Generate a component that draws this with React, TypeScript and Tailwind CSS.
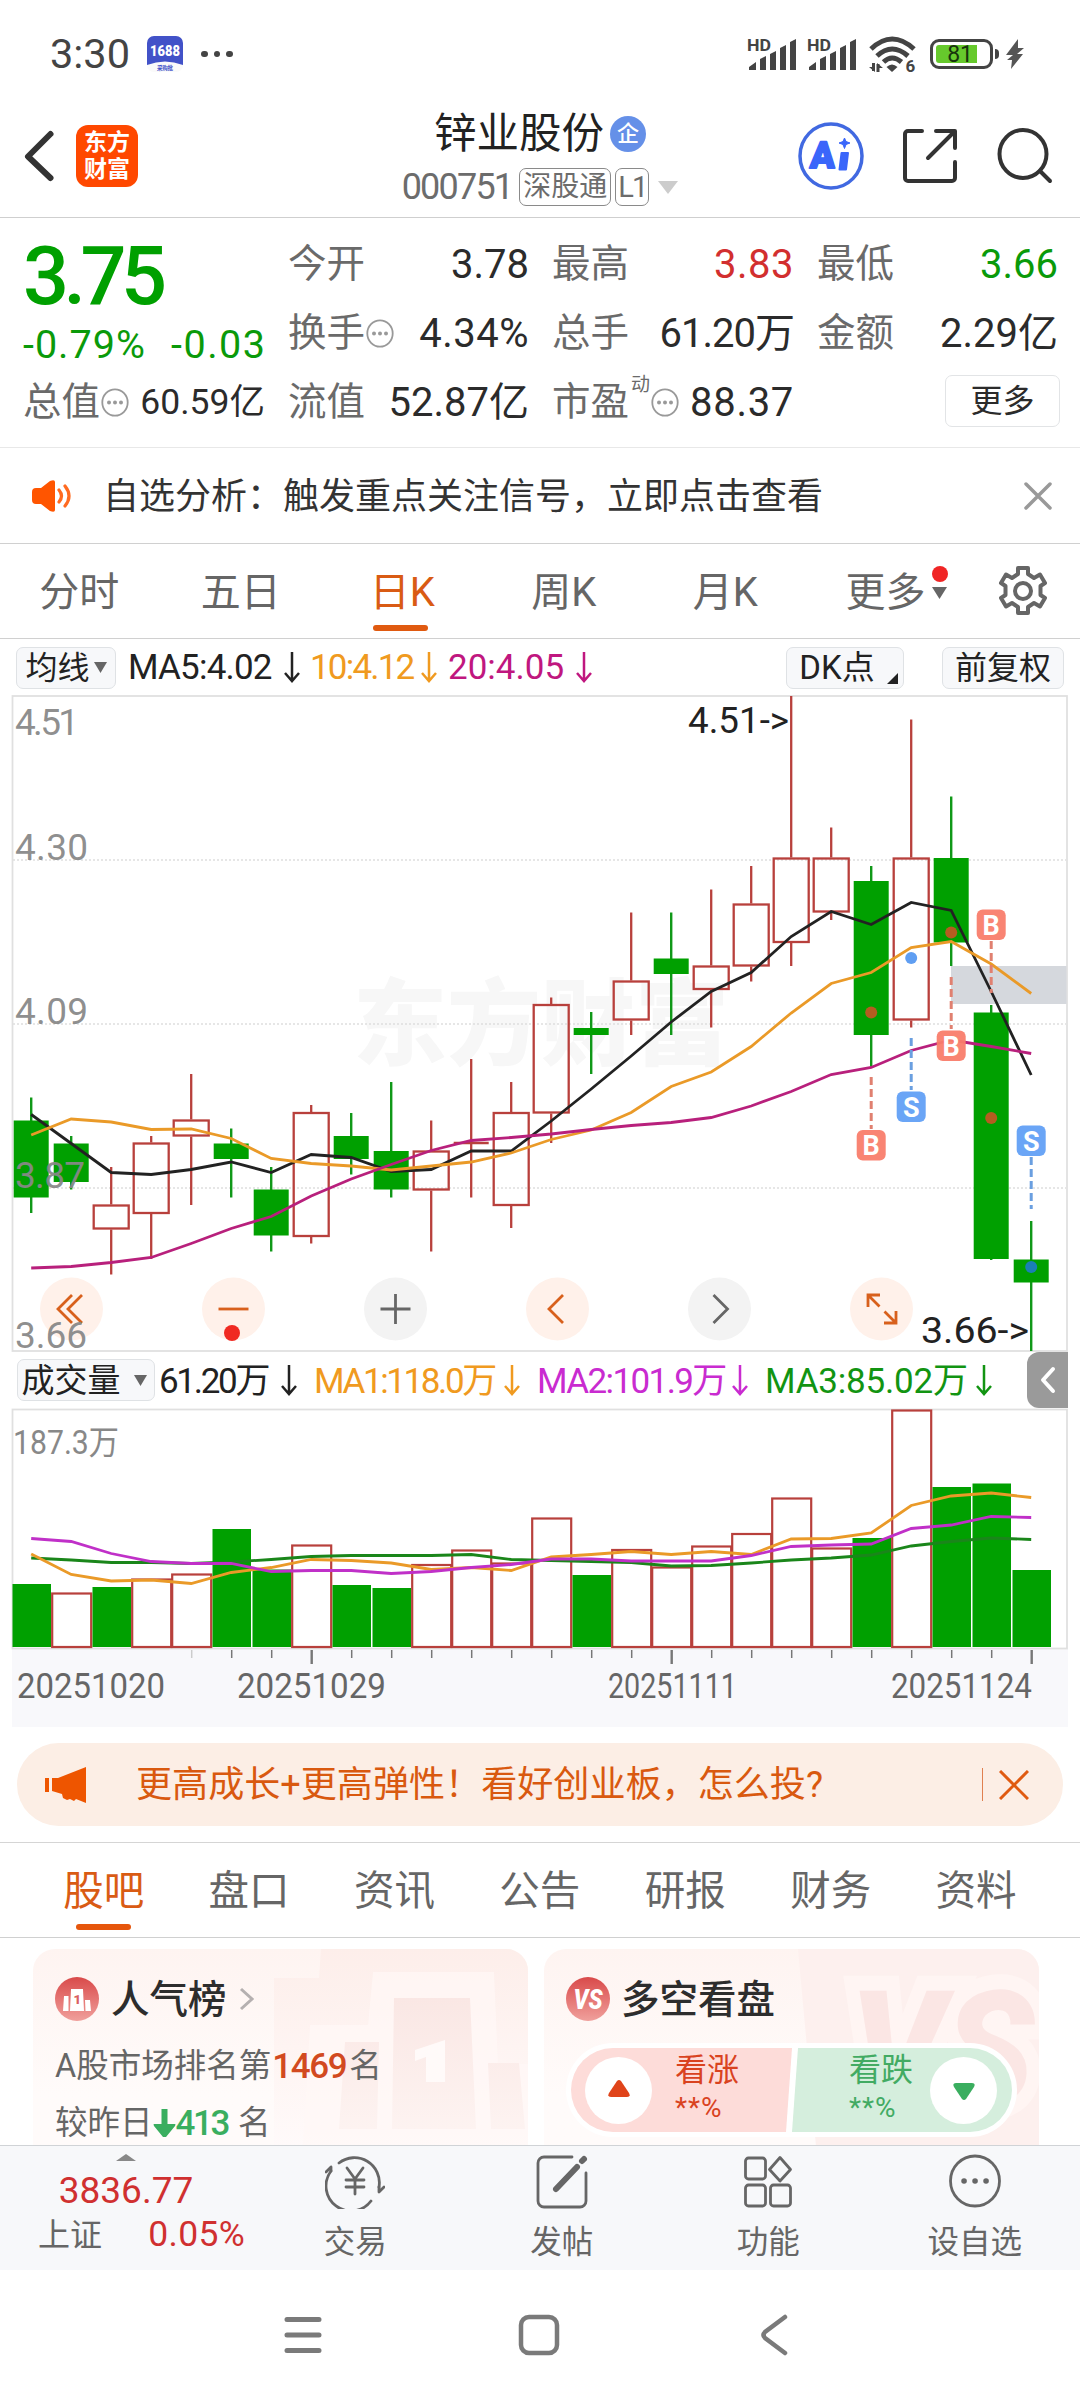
import type { ReactNode } from "react"

const UP = "#b8403c"
const DOWN = "#00a000"

// [up, high, bodyTop, bodyBottom, low] in chart pixels
const candles: [boolean, number, number, number, number][] = [
  [false, 1097.5, 1120.5, 1197.5, 1213],
  [false, 1136, 1143.5, 1182, 1189.5],
  [true, 1167, 1204.5, 1229.5, 1274.5],
  [true, 1136, 1142.5, 1214, 1259],
  [true, 1074, 1119.5, 1136.5, 1205],
  [false, 1128.5, 1143.5, 1159, 1197.5],
  [false, 1167, 1189.5, 1235.5, 1251.5],
  [true, 1105, 1112, 1237, 1243.5],
  [false, 1113, 1136, 1159, 1174.5],
  [false, 1082, 1151, 1189.5, 1197.5],
  [true, 1120.5, 1150.5, 1190.5, 1251.5],
  [true, 1059, 1142, 1144, 1197.5],
  [true, 1082, 1112, 1206, 1228],
  [true, 997.5, 1004, 1113.5, 1143],
  [false, 1012, 1028, 1035, 1074],
  [true, 912.5, 980.5, 1020.5, 1035],
  [false, 912.5, 958.5, 974, 1035],
  [true, 889.5, 965.5, 990, 1027.5],
  [true, 866, 903.5, 966.5, 981.5],
  [true, 696, 857.5, 943, 966],
  [true, 827.5, 857.5, 912.5, 920],
  [false, 866, 881, 1035, 1066.5],
  [true, 719.5, 857.5, 1020.5, 1027.5],
  [false, 796.5, 858, 942.5, 966],
  [false, 1005, 1012.5, 1259, 1260],
  [false, 1221, 1259.5, 1282.5, 1351],
]

const ma5 = [1114.5, 1143.5, 1172.5, 1174.5, 1169.5, 1162, 1172.5, 1154.5, 1157.5, 1171.5, 1169.5, 1151, 1151, 1121, 1089, 1056, 1022, 991.5, 972.5, 936.5, 911.5, 924.5, 902.5, 910.5, 991.5, 1075]
const ma10 = [1135, 1119, 1122, 1129.5, 1129, 1138.5, 1158.5, 1163.5, 1166, 1170, 1166, 1162, 1153, 1139.5, 1130, 1112.5, 1086.5, 1072, 1046.5, 1013, 983.5, 972.5, 947.5, 941.5, 964, 993.5]
const ma20 = [1268, 1266.5, 1262.5, 1257.5, 1243.5, 1228.5, 1216.5, 1196, 1179, 1164.5, 1150.5, 1140.5, 1137.5, 1134, 1129.5, 1125.5, 1122.5, 1117.5, 1106, 1091.5, 1074.5, 1067.5, 1050.5, 1040, 1046.5, 1053.5]

const volumes = [1584, 1592.5, 1587, 1578.5, 1573.5, 1529, 1569.5, 1544.5, 1585, 1588, 1564, 1549.5, 1562.5, 1517.5, 1575, 1549, 1566.5, 1545.5, 1533, 1497.5, 1547.5, 1538, 1409.5, 1487, 1483.5, 1570]
const volUp = [0, 1, 0, 1, 1, 0, 0, 1, 0, 0, 1, 1, 1, 1, 0, 1, 1, 1, 1, 1, 1, 0, 1, 0, 0, 0]
const vma1 = [1554, 1574.5, 1581, 1580, 1583.5, 1572.5, 1567.5, 1559.5, 1560.5, 1563, 1569.5, 1567.5, 1570.5, 1557, 1554.5, 1551.5, 1554.5, 1551.5, 1554.5, 1539, 1538.5, 1533, 1505.5, 1496, 1493, 1497.5]
const vma2 = [1538.5, 1541.5, 1553.5, 1561.5, 1563.5, 1563.5, 1571.5, 1570.5, 1570.5, 1573.5, 1571.5, 1567.5, 1564.5, 1559, 1559, 1561, 1561, 1561, 1555.5, 1546.5, 1545, 1544, 1528.5, 1525, 1516.5, 1517.5]
const vma3 = [1558, 1560, 1562.5, 1562.5, 1563.5, 1562, 1559.5, 1556.5, 1555.5, 1555.5, 1555.5, 1554.5, 1559.5, 1560.5, 1561.5, 1562.5, 1566, 1565.5, 1563, 1560, 1558, 1555, 1546, 1541.5, 1538, 1539.5]

const cx = (i: number) => 31.2 + 40 * i
const line = (ys: number[]) => ys.map((y, i) => `${cx(i)},${y}`).join(" ")

function Signal() {
  return (
    <svg width="50" height="34" viewBox="0 0 50 34" fill="#444">
      <text x="0" y="13.5" fontSize="16" fontWeight="700" textLength="24" lengthAdjust="spacingAndGlyphs">HD</text>
      <path d="M2 33v-3l7-5v8zM13 33V22l6-3v14zM23 33V17l6-3v19zM33 33V11l6-3v25zM43 33V5l6-3v31z" />
    </svg>
  )
}

function StatusBar() {
  return (
    <div className="flex h-[108px] items-center pl-[50px] pr-[56px] text-[#444]">
      <span className="w-[97px] text-[41.5px] leading-none">3:30</span>
      <svg width="36" height="36" viewBox="0 0 36 36">
        <rect width="36" height="36" rx="7" fill="#fafafa" />
        <path d="M0 29V7a7 7 0 0 1 7-7h22a7 7 0 0 1 7 7v22Q18 22 0 29z" fill="#4252c8" />
        <text x="3" y="20" fontSize="14" fontWeight="900" fill="#fff" textLength="30" lengthAdjust="spacingAndGlyphs">1688</text>
        <text x="10" y="33.5" fontSize="5.5" fontWeight="700" fill="#4252c8" textLength="16">采购批</text>
      </svg>
      <div className="ml-[18px] flex gap-[6px]">
        <i className="size-[6.5px] rounded-full bg-[#444]" />
        <i className="size-[6.5px] rounded-full bg-[#444]" />
        <i className="size-[6.5px] rounded-full bg-[#444]" />
      </div>
      <div className="ml-auto flex items-center">
        <Signal />
        <div className="ml-[10px] flex"><Signal /></div>
        <svg className="ml-[12px]" width="48" height="38" viewBox="0 0 48 38" fill="none" stroke="#444" strokeWidth="5">
          <path d="M2 14Q23 -6 45 14M8 21Q23 7 39 21M14.500 27Q23 19 32.500 27" />
          <path d="M17.500 32Q23 27 28.500 32L23 37z" fill="#444" stroke="none" />
          <path d="M4.500 28v8M9 37v-8" strokeWidth="3" />
          <path d="M0 32l6 5v-5zM14 33l-6-5v5z" fill="#444" stroke="none" />
          <text x="36.500" y="37" fontSize="17" fontWeight="700" fill="#444" stroke="none">6</text>
        </svg>
        <div className="ml-[13px] flex h-[30px] w-[63px] items-center rounded-[9px] border-[3.5px] border-[#444] p-[3px]">
          <div className="flex h-[18px] w-[41px] items-center justify-end rounded-l-[3px] bg-[#66c92c] pr-[4px] text-[23px] leading-none text-[#17330c]">81</div>
        </div>
        <i className="ml-[2px] h-[10px] w-[4px] rounded-r-sm bg-[#444]" />
        <svg className="ml-[7px]" width="18" height="30" viewBox="0 0 18 30" fill="#555">
          <path d="M12 0L0 16h7L1 21h5l-1 9 12-15h-6l7-6h-6z" />
        </svg>
      </div>
    </div>
  )
}

function Header() {
  return (
    <div className="flex h-[110px] border-b border-[#cfcfcf]">
      <div className="flex h-24 w-[380px] items-center pl-[22px]">
        <svg width="34" height="56" viewBox="0 0 34 56" fill="none" stroke="#333" strokeWidth="6" strokeLinecap="round" strokeLinejoin="round">
          <path d="M28.500 6L6 28.500 28.500 50" />
        </svg>
        <div className="ml-5 flex size-[62px] flex-col items-center justify-center rounded-[12px] bg-[#ff4800] text-[23px] leading-[27px] font-bold text-white">
          <span>东方</span>
          <span>财富</span>
        </div>
      </div>
      <div className="flex w-80 flex-col items-center">
        <div className="mt-[2px] flex h-[48px] items-center text-[#222]">
          <span className="text-[42.5px] leading-none">锌业股份</span>
          <span className="ml-[6px] flex size-9 items-center justify-center rounded-full bg-[#6590e8] text-[22px] leading-none font-medium text-white">企</span>
        </div>
        <div className="mt-[9px] flex h-[40px] items-center text-[#6c6c6c]">
          <span className="text-[36px] leading-none tracking-[-1.8px]">000751</span>
          <span className="ml-[7px] flex h-[38px] w-[92px] items-center justify-center rounded-[7px] border-[1.5px] border-[#8a8a8a] text-[28px] leading-none">深股通</span>
          <span className="ml-[4px] flex h-[38px] w-[34px] items-center justify-center rounded-[7px] border-[1.5px] border-[#8a8a8a] text-[29px] leading-none tracking-[-2px]">L1</span>
          <svg className="ml-[9px]" width="20" height="13" viewBox="0 0 20 13"><path d="M0 0h20L10 13z" fill="#ccc" /></svg>
        </div>
      </div>
      <div className="flex h-24 flex-1 items-center pl-[98px]">
        <svg width="66" height="68" viewBox="0 0 66 68">
          <ellipse cx="33" cy="34" rx="31" ry="32" fill="#fff" stroke="#4169e1" strokeWidth="3.500" />
          <g fill="#3a66fa" stroke="#3a66fa" strokeLinejoin="round">
            <text x="14" y="46.500" fontSize="37" fontWeight="900" strokeWidth="1.800" transform="skewX(-3)" textLength="25" lengthAdjust="spacingAndGlyphs">A</text>
            <path d="M43.500 31h6.500l-2 16.500h-6.500z" strokeWidth="2" />
            <path d="M46.500 16l1.500 3.500 4 1.500-4 1.500-1.500 4-1.500-4-4-1.500 4-1.500z" strokeWidth="1" />
          </g>
        </svg>
        <svg className="ml-[38px]" width="56" height="56" viewBox="0 0 56 56" fill="none" stroke="#333" strokeWidth="4" strokeLinecap="round" strokeLinejoin="round">
          <path d="M20 3H6a3 3 0 0 0-3 3v44a3 3 0 0 0 3 3h44a3 3 0 0 0 3-3V34" />
          <path d="M34 3h19v17M52 4L26 30" />
        </svg>
        <svg className="ml-[38px]" width="58" height="58" viewBox="0 0 58 58" fill="none" stroke="#333" strokeWidth="4" strokeLinecap="round">
          <ellipse cx="27" cy="27" rx="23.500" ry="24" />
          <path d="M44 44l10 10" />
        </svg>
      </div>
    </div>
  )
}

function Info() {
  return (
    <svg className="ml-[1px] shrink-0" width="28" height="29" viewBox="0 0 28 29">
      <ellipse cx="14" cy="14.500" rx="12.700" ry="13.200" fill="none" stroke="#999" strokeWidth="1.800" />
      <g fill="#999"><circle cx="8" cy="14.500" r="2" /><circle cx="14" cy="14.500" r="2" /><circle cx="20" cy="14.500" r="2" /></g>
    </svg>
  )
}

function Stat({ label, extra, value, tone = "text-[#2b2b2b]" }: { label: string; extra?: ReactNode; value: string; tone?: string }) {
  return (
    <div className="flex h-[69px] items-center">
      <span className="text-[38.5px] leading-none whitespace-nowrap text-[#6a6a6a]">{label}</span>
      {extra}
      <span className={"ml-auto text-[40px] leading-none whitespace-nowrap " + tone}>{value}</span>
    </div>
  )
}

function Quote() {
  return (
    <div className="flex h-[230px] border-b border-[#e8e8e8] pt-[12px] pl-[23px]">
      <div className="w-[242px]">
        <div className="flex h-[92px] items-center text-[81px] leading-none font-medium tracking-[-5.5px] text-[#00a000]">3.75</div>
        <div className="flex h-[46px] items-center justify-between text-[39.5px] leading-none text-[#0a9a0a]">
          <span className="tracking-[1px]">-0.79%</span>
          <span className="mr-[-1.5px] tracking-[1.5px]">-0.03</span>
        </div>
        <div className="flex h-[69px] items-center">
          <span className="text-[38.5px] leading-none whitespace-nowrap text-[#6a6a6a]">总值</span>
          <Info />
          <span className="ml-auto text-[35.5px] leading-none whitespace-nowrap text-[#2b2b2b]">60.59亿</span>
        </div>
      </div>
      <div className="ml-[23px] w-[241px]">
        <Stat label="今开" value="3.78" />
        <Stat label="换手" extra={<Info />} value="4.34%" tone="tracking-[0.5px] text-[#2b2b2b]" />
        <Stat label="流值" value="52.87亿" />
      </div>
      <div className="ml-[23px] w-[242px]">
        <Stat label="最高" value="3.83" tone="tracking-[0.5px] text-[#d22f2f]" />
        <Stat label="总手" value="61.20万" tone="tracking-[-1px] text-[#2b2b2b]" />
        <Stat
          label="市盈"
          extra={<><span className="-mt-9 ml-[2px] text-[19px] leading-none text-[#6a6a6a]">动</span><Info /></>}
          value="88.37"
          tone="tracking-[0.7px] text-[#2b2b2b]"
        />
      </div>
      <div className="ml-[23px] w-[241px]">
        <Stat label="最低" value="3.66" tone="text-[#0a9a0a]" />
        <Stat label="金额" value="2.29亿" />
        <div className="flex h-[69px] items-center justify-end">
          <button className="mt-[-3px] mr-[-2px] h-[52px] w-[115px] rounded-[7px] border-[1.5px] border-[#e2e4e6] text-[32px] leading-none text-[#2b2b2b]">更多</button>
        </div>
      </div>
    </div>
  )
}

function Notice() {
  return (
    <div className="flex h-[96px] items-center border-b border-[#d0d0d0] pl-[31px] pr-[28px]">
      <svg width="42" height="34" viewBox="0 0 42 34">
        <path d="M1 13q0-4 4-4h5L19 2q5-2 5 1v28q0 3-5 1l-9-7H5q-4 0-4-4z" fill="#ff5500" />
        <path d="M28 11q5 6 0 12M34 7q8 10 0 20" fill="none" stroke="#ff6a20" strokeWidth="3.200" strokeLinecap="round" />
      </svg>
      <span className="mt-[2px] ml-[30px] text-[36px] leading-none whitespace-nowrap text-[#333]">自选分析：触发重点关注信号，立即点击查看</span>
      <svg className="ml-auto" width="28" height="28" viewBox="0 0 28 28" stroke="#999" strokeWidth="3.500" strokeLinecap="round">
        <path d="M2 2l24 24M26 2L2 26" />
      </svg>
    </div>
  )
}

function PeriodTabs() {
  const tabs = ["分时", "五日", "日K", "周K", "月K"]
  return (
    <div className="flex h-[95px] border-b border-[#d0d0d0] text-[40px] leading-none text-[#666]">
      {tabs.map((t) => (
        <div key={t} className={"relative flex w-[161.500px] items-center justify-center pt-[3px] pr-[3px] " + (t === "日K" ? "text-[#d95b14]" : "")}>
          {t}
          {t === "日K" && <i className="absolute bottom-[7px] mr-[3px] h-[6px] w-[55px] rounded-full bg-[#e05a10]" />}
        </div>
      ))}
      <div className="flex items-center pt-[3px] pl-[38px]">
        更多
        <div className="ml-[6px] flex flex-col items-center gap-[5px] pb-[20px]">
          <i className="size-4 rounded-full bg-[#f02525]" />
          <svg width="15" height="12" viewBox="0 0 15 12"><path d="M0 0h15L7.500 12z" fill="#666" /></svg>
        </div>
      </div>
      <svg className="ml-[50px] self-center" width="50" height="52" viewBox="0 0 50 52" fill="none" stroke="#666" strokeWidth="4" strokeLinejoin="round">
        <path d="M20 3h10v6l6 4 6-3.500 5 8.500-4.500 3v9l4.500 3-5 8.500-6-3.500-6 4v6H20v-6l-6-4-6 3.500L3 33l4.500-3v-9L3 18l5-8.500 6 3.500 6-4z" />
        <circle cx="25" cy="26" r="8" />
      </svg>
    </div>
  )
}

function Down({ className = "" }: { className?: string }) {
  return (
    <svg className={"shrink-0 " + className} width="16" height="31" viewBox="0 0 16 31" fill="none" stroke="currentColor" strokeWidth="2.500">
      <path d="M8 0v29M1 21l7 8 7-8" />
    </svg>
  )
}

function Caret() {
  return <svg width="13" height="11" viewBox="0 0 13 11"><path d="M0 0h13L6.500 11z" fill="#666" /></svg>
}

function MaRow() {
  return (
    <div className="flex h-[57px] items-center pt-[2px] pl-[16px] text-[35px] leading-none whitespace-nowrap">
      <button className="flex h-[42px] w-[100px] items-center justify-center gap-[4px] rounded-[7px] border-[1.5px] border-[#dfe2e5] bg-[#f7f8fa] text-[32px] leading-none whitespace-nowrap text-[#222]">均线<Caret /></button>
      <span className="ml-[12px] w-[156px] tracking-[-0.8px] text-[#222]">MA5:4.02</span>
      <Down className="text-[#222]" />
      <span className="ml-[10px] w-[111px] tracking-[-1.8px] text-[#f09a20]">10:4.12</span>
      <Down className="text-[#f09a20]" />
      <span className="ml-[11px] w-[128px] text-[#c0177f]">20:4.05</span>
      <Down className="text-[#c0177f]" />
      <button className="relative ml-[194px] h-[42px] w-[118px] rounded-[7px] border-[1.5px] border-[#dfe2e5] bg-[#f7f8fa] pr-[16px] text-[33px] leading-none whitespace-nowrap text-[#222]">
        DK点
        <svg className="absolute right-[5px] bottom-[4px]" width="11" height="11" viewBox="0 0 11 11"><path d="M11 0v11H0z" fill="#222" /></svg>
      </button>
      <button className="ml-[38px] h-[42px] w-[122px] rounded-[7px] border-[1.5px] border-[#dfe2e5] bg-[#f7f8fa] text-[32px] leading-none whitespace-nowrap text-[#222]">前复权</button>
    </div>
  )
}

function Marker({ i, y, kind, from, to }: { i: number; y: number; kind: "B" | "S"; from: number; to: number }) {
  const color = kind === "B" ? "#f97d6c" : "#62a0f6"
  return (
    <g>
      <line x1={cx(i)} x2={cx(i)} y1={from} y2={to} stroke={kind === "B" ? "#e08070" : "#6a9fe0"} strokeWidth="3" strokeDasharray="8 4" />
      <rect x={cx(i) - 14.5} y={y} width="29" height="30.500" rx="6" fill={color} fillOpacity="0.95" />
      <text x={cx(i)} y={y + 25} fontSize="27" fontWeight="700" fill="#fff" textAnchor="middle">{kind}</text>
    </g>
  )
}

const controls = [
  { x: 71.5, on: true, d: "M72 1295l-14 14 14 14M82 1295l-14 14 14 14" },
  { x: 233.5, on: true, d: "M218.500 1309h30" },
  { x: 395.5, on: false, d: "M380.500 1309h30M395.500 1294v30" },
  { x: 557.5, on: true, d: "M563 1295l-14 14 14 14" },
  { x: 719.5, on: false, d: "M713.500 1295l14 14-14 14" },
  { x: 881.5, on: true, d: "M868 1307v-12h12M868.500 1295.500l11 11M896 1311v12h-12M895.500 1322.500l-11-11" },
]

function KChart() {
  return (
    <svg className="block" width="1080" height="657" viewBox="0 695 1080 657" fill="none">
      <text x="353" y="1058" fontSize="94" fontWeight="900" fill="#f7f7f7" textLength="376">东方财富</text>
      <g stroke="#dedede" strokeWidth="1.500" strokeDasharray="2 2">
        <path d="M13 860H1066M13 1024H1066M13 1188H1066" />
      </g>
      <rect x="12.500" y="696" width="1054.500" height="655" stroke="#e0e0e0" strokeWidth="1.800" />
      <rect x="951" y="966" width="115.500" height="38" fill="#d5d8dd" />

      {controls.map((c) => (
        <g key={c.x}>
          <circle cx={c.x} cy="1309" r="31.500" fill={c.on ? "#fff1ea" : "#f3f3f3"} />
          <path d={c.d} stroke={c.on ? "#d8601c" : "#666"} strokeWidth="2.800" />
        </g>
      ))}
      <circle cx="232" cy="1333" r="8" fill="#f02a22" />

      {candles.map(([up, high, top, bottom, low], i) => {
        const x = cx(i)
        if (!up) {
          return (
            <g key={i}>
              <line x1={x} x2={x} y1={high} y2={low} stroke="#109818" strokeWidth="2.400" />
              <rect x={x - 17.5} y={top} width="35" height={bottom - top} fill={DOWN} />
            </g>
          )
        }
        return (
          <g key={i} stroke={UP} strokeWidth="2.300">
            <path d={`M${x} ${high}V${top}M${x} ${bottom}V${low}`} />
            {bottom - top < 4 ? <path d={`M${x - 17.5} 1143h35`} /> : <rect x={x - 17.5} y={top + 1} width="35" height={bottom - top - 2} />}
          </g>
        )
      })}

      <polyline points={line(ma5)} stroke="#222" strokeWidth="2.800" />
      <polyline points={line(ma10)} stroke="#ea9a28" strokeWidth="2.800" />
      <polyline points={line(ma20)} stroke="#b8207c" strokeWidth="2.800" />

      <circle cx={cx(21)} cy="1012.500" r="6" fill="#b55c20" />
      <circle cx={cx(22)} cy="958" r="6" fill="#5f9ef2" />
      <circle cx={cx(23)} cy="932.500" r="6" fill="#b55c20" />
      <circle cx={cx(24)} cy="1118" r="6" fill="#b55c20" />
      <circle cx={cx(25)} cy="1267" r="6" fill="#1a7fb5" />
      <Marker i={21} y={1130} kind="B" from={1077} to={1129} />
      <Marker i={22} y={1091.5} kind="S" from={1038} to={1090} />
      <Marker i={23} y={1030.5} kind="B" from={977} to={1029} />
      <Marker i={24} y={909.5} kind="B" from={941} to={993} />
      <Marker i={25} y={1125.5} kind="S" from={1157} to={1209} />

      <g fill="#888" fillOpacity="0.95" fontSize="37">
        <text x="15" y="735" textLength="64">4.51</text>
        <text x="15" y="860" textLength="73">4.30</text>
        <text x="15" y="1024" textLength="73">4.09</text>
        <text x="15" y="1188" textLength="70">3.87</text>
        <text x="15" y="1348" textLength="72">3.66</text>
      </g>
      <g fill="#222" fontSize="37">
        <text x="688" y="733" textLength="101" lengthAdjust="spacingAndGlyphs">4.51-&gt;</text>
        <text x="921" y="1343" textLength="108" lengthAdjust="spacingAndGlyphs">3.66-&gt;</text>
      </g>
    </svg>
  )
}

function VolumeRow() {
  return (
    <div className="flex h-[56px] items-center pl-[17px] text-[35px] leading-none whitespace-nowrap">
      <button className="flex h-[42px] w-[138px] items-center justify-center gap-[13px] rounded-[7px] border-[1.5px] border-[#dfe2e5] bg-[#f7f8fa] pr-[4px] text-[33px] leading-none text-[#222]">成交量<Caret /></button>
      <span className="mt-[2px] ml-[4px] w-[122px] tracking-[-2.3px] text-[#222]">61.20万</span>
      <Down className="text-[#222]" />
      <span className="mt-[2px] ml-[17px] w-[190px] tracking-[-2.4px] text-[#f09a20]">MA1:118.0万</span>
      <Down className="text-[#f09a20]" />
      <span className="mt-[2px] ml-[17px] w-[195px] tracking-[-1.6px] text-[#c92bd0]">MA2:101.9万</span>
      <Down className="text-[#c92bd0]" />
      <span className="mt-[2px] ml-[17px] w-[211px] tracking-[-0.2px] text-[#129412]">MA3:85.02万</span>
      <Down className="text-[#129412]" />
      <div className="ml-auto mr-[12px] flex h-[56px] w-[41px] items-center justify-center rounded-l-[12px] bg-[#9a9a9a]">
        <svg width="16" height="28" viewBox="0 0 16 28" fill="none" stroke="#fff" strokeWidth="4" strokeLinecap="round" strokeLinejoin="round"><path d="M13 3L3 14l10 11" /></svg>
      </div>
    </div>
  )
}

function VolumeChart() {
  return (
    <svg className="block" width="1080" height="319" viewBox="0 1408 1080 319" fill="none">
      <rect x="12" y="1649" width="1056" height="78" fill="#f8f8fb" />
      <rect x="12.500" y="1409.500" width="1054.500" height="239" stroke="#e0e0e0" strokeWidth="1.800" />
      {volumes.map((y, i) =>
        volUp[i] ? (
          <rect key={i} x={cx(i) - 19} y={y + 1} width="39" height={1646 - y} stroke={UP} strokeWidth="2.200" />
        ) : (
          <rect key={i} x={cx(i) - 18.7} y={y} width="38.500" height={1647 - y} fill={DOWN} />
        )
      )}
      <polyline points={line(vma3)} stroke="#1a861a" strokeWidth="2.800" />
      <polyline points={line(vma1)} stroke="#ea9a28" strokeWidth="2.800" />
      <polyline points={line(vma2)} stroke="#c030c8" strokeWidth="2.800" />
      {volumes.map((_, i) =>
        i < 4 ? null : (
          <line key={i} x1={cx(i) + 0.5} x2={cx(i) + 0.5} y1="1650" y2={(i - 7) % 9 === 0 ? 1664 : 1658} stroke={i === 4 ? "#ccc" : "#777"} strokeWidth={(i - 7) % 9 === 0 ? 2.4 : 1.5} />
        )
      )}
      <text x="13" y="1454" fontSize="33" fill="#888" textLength="106" lengthAdjust="spacingAndGlyphs">187.3万</text>
      <g fill="#666" fontSize="35">
        <text x="17" y="1698" textLength="148" lengthAdjust="spacingAndGlyphs">20251020</text>
        <text x="237" y="1698" textLength="149" lengthAdjust="spacingAndGlyphs">20251029</text>
        <text x="608" y="1698" textLength="129" lengthAdjust="spacingAndGlyphs">20251111</text>
        <text x="891" y="1698" textLength="141" lengthAdjust="spacingAndGlyphs">20251124</text>
      </g>
    </svg>
  )
}

function Promo() {
  return (
    <div className="border-b border-[#d5d5d5] px-[17px] pt-[16px] pb-[16px]">
      <div className="flex h-[83px] items-center rounded-full bg-[#fceee5] pl-[27px] pr-[34px]">
        <svg width="43" height="38" viewBox="0 0 43 38" fill="#ee5500">
          <path d="M1 12h4v14H1zM8 12h6L42 1v36l-10-4-2 2-4-2-3 1-4-2-1-4-10-3z" />
        </svg>
        <span className="mt-[2px] ml-[49px] text-[36.1px] leading-none whitespace-nowrap text-[#d9590f]">更高成长+更高弹性！看好创业板，怎么投?</span>
        <i className="ml-auto h-[33px] w-[1.5px] bg-[#e08050]" />
        <svg className="ml-[16px]" width="30" height="30" viewBox="0 0 30 30" stroke="#e05a10" strokeWidth="3"><path d="M1 1l28 28M29 1L1 29" /></svg>
      </div>
    </div>
  )
}

function SectionTabs() {
  const tabs = ["股吧", "盘口", "资讯", "公告", "研报", "财务", "资料"]
  return (
    <div className="flex h-[95px] border-b border-[#d0d0d0] pl-[31px] text-[40.5px] leading-none text-[#666]">
      {tabs.map((t, i) => (
        <div key={t} className={"relative flex w-[145.400px] items-center justify-center pt-[2px] " + (i === 0 ? "text-[#d95b14]" : "")}>
          {t}
          {i === 0 && <i className="absolute bottom-[7px] h-[6px] w-[55px] rounded-full bg-[#e6560c]" />}
        </div>
      ))}
    </div>
  )
}

function Cards() {
  return (
    <div className="flex h-[207px] gap-4 overflow-hidden pt-[11px] pl-[33px]">
      <div className="relative h-[240px] w-[495px] overflow-hidden rounded-[22px] bg-linear-to-b from-[#fef4f1] to-[#fffbfa] to-60% pt-[28px] pl-[22px] text-[32.5px] leading-none text-[#666]">
        <svg className="absolute top-0 left-0" width="495" height="197" viewBox="0 0 495 197">
          <defs>
            <linearGradient id="podium" x1="0" y1="0" x2="0" y2="1">
              <stop offset="0" stopColor="#fae7e4" />
              <stop offset="1" stopColor="#fdf3f1" />
            </linearGradient>
            <linearGradient id="shade" x1="0" y1="0" x2="0" y2="1">
              <stop offset="0" stopColor="#fdeeea" />
              <stop offset="1" stopColor="#fffafa" />
            </linearGradient>
          </defs>
          <path d="M288 0h207v197H241V29h45z" fill="url(#shade)" />
          <path d="M340 23h121l4 92h30v82H270l7-121h58z" fill="#fff8f6" fillOpacity="0.7" />
          <path d="M361 49h76l6 131h-84zM312 93h34l-2 87h-38zM455 114h31l6 66h-34z" fill="url(#podium)" />
          <path d="M382 101l30-10v42h-19v-25l-11 4z" fill="#fffaf9" />
        </svg>
        <div className="relative flex h-[44px] items-center">
          <svg width="44" height="44" viewBox="0 0 44 44">
            <defs><linearGradient id="ic" x1="0" y1="0" x2="0" y2="1"><stop offset="0" stopColor="#d94a4a" /><stop offset="1" stopColor="#f0a09c" /></linearGradient></defs>
            <circle cx="22" cy="22" r="22" fill="url(#ic)" />
            <path d="M16 12h12l1 22H15zM9 19h4.500v15H8zM30 23h5l1 11h-5.500z" fill="#fff" />
            <text x="18.500" y="27" fontSize="13" fontWeight="900" fill="#d96060">1</text>
          </svg>
          <span className="mt-[2px] ml-[12px] text-[38.5px] font-medium text-[#2d2d2d]">人气榜</span>
          <svg className="ml-[12px]" width="16" height="24" viewBox="0 0 16 24" fill="none" stroke="#b5b0b0" strokeWidth="3"><path d="M2 2l11 10L2 22" /></svg>
        </div>
        <div className="relative mt-[28px] flex h-[34px] items-center whitespace-nowrap">
          A股市场排名第<b className="ml-[1px] text-[35px] font-medium tracking-[-1.4px] text-[#d24a20]">1469</b><span className="ml-[3px]">名</span>
        </div>
        <div className="relative mt-[23px] flex h-[34px] items-center whitespace-nowrap">
          较昨日
          <svg width="23" height="30" viewBox="0 0 23 30" fill="#3aae5f"><path d="M8.500 1h6v15H22q1 0 0 2L13 29h-3L1 18q-1-2 0-2h7.500z" /></svg>
          <b className="text-[35px] font-medium tracking-[-2.4px] text-[#3aae5f]">413</b><span className="ml-[10px]">名</span>
        </div>
      </div>

      <div className="relative h-[240px] w-[495px] overflow-hidden rounded-[22px] bg-linear-to-b from-[#fef4f1] to-[#fffbfa] to-60% pt-[28px]">
        <svg className="absolute top-0 left-0" width="495" height="197" viewBox="0 0 495 197">
          <path d="M254 0h241v197H272z" fill="#fdf0ee" />
          <text x="306" y="155" fontSize="160" fontWeight="900" fontStyle="italic" fill="#fbe6e4" stroke="#fff5f3" strokeWidth="30" paintOrder="stroke" textLength="184" lengthAdjust="spacingAndGlyphs">VS</text>
        </svg>
        <div className="relative flex h-[44px] items-center pl-[22px] text-[38.5px] leading-none font-medium text-[#2d2d2d]">
          <svg width="44" height="44" viewBox="0 0 44 44">
            <circle cx="22" cy="22" r="22" fill="url(#ic)" />
            <text x="7.500" y="32" fontSize="27" fontWeight="900" fontStyle="italic" fill="#fff" textLength="29" lengthAdjust="spacingAndGlyphs">VS</text>
          </svg>
          <span className="mt-[2px] ml-[11px]">多空看盘</span>
        </div>
        <div className="relative mt-[22px] ml-[22px] flex h-[94px] w-[451px] items-center rounded-full bg-white p-[5px] text-[32px] leading-none">
          <svg className="absolute top-[5px] left-[5px]" width="441" height="84" viewBox="0 0 441 84">
            <path d="M42 0h179l-6 84H42A42 42 0 0 1 42 0z" fill="#fddcd9" />
            <path d="M227 0h172a42 42 0 0 1 0 84H221z" fill="#d5eedd" />
          </svg>
          <div className="relative ml-[14px] flex size-[67px] items-center justify-center rounded-full bg-white">
            <svg className="mt-[-3px]" width="22" height="17" viewBox="0 0 22 17"><path d="M9 1q2-2 4 0l8 12q2 4-2 4H3q-4 0-2-4z" fill="#e0441a" /></svg>
          </div>
          <div className="relative mt-[-5px] ml-[23px] flex flex-col gap-[8px] text-[#d9431f]">
            <span>看涨</span>
            <span className="text-[28px] tracking-[1px]">**%</span>
          </div>
          <div className="relative mt-[-5px] mr-[17px] ml-auto flex flex-col gap-[8px] text-[#42ab63]">
            <span>看跌</span>
            <span className="text-[28px] tracking-[1px]">**%</span>
          </div>
          <div className="relative mr-[15px] flex size-[67px] items-center justify-center rounded-full bg-white">
            <svg className="mt-[3px]" width="22" height="17" viewBox="0 0 22 17"><path d="M9 16q2 2 4 0l8-12q2-4-2-4H3Q-1 0 1 4z" fill="#3aae5f" /></svg>
          </div>
        </div>
      </div>
    </div>
  )
}

function Tool({ label, children }: { label: string; children: ReactNode }) {
  return (
    <div className="flex w-[206.500px] flex-col items-center pt-[7px] text-[31.5px] leading-none text-[#666]">
      <svg width="60" height="56" viewBox="0 0 60 56" fill="none" stroke="#666" strokeWidth="2.800" strokeLinecap="round" strokeLinejoin="round">{children}</svg>
      <span className="mt-[18px]">{label}</span>
    </div>
  )
}

function BottomBar() {
  return (
    <div className="flex h-[125px] border-t border-[#d0d3d6] bg-[#f7f8fa]">
      <div className="flex w-[252px] flex-col items-center pt-[8px] leading-none text-[#d03030]">
        <svg width="20" height="7" viewBox="0 0 20 7"><path d="M0 7L10 0l10 7z" fill="#888" /></svg>
        <div className="mt-[11px] text-[37px]">3836.77</div>
        <div className="mt-[8px] flex w-full items-center justify-between pr-[7px] pl-[38px] text-[35.5px]">
          <span className="text-[32px] text-[#666]">上证</span>
          <span className="tracking-[0.3px]">0.05%</span>
        </div>
      </div>
      <Tool label="交易">
        <path d="M14 10a25 25 0 0 1 40 24M46 48A25 25 0 0 1 6 18" />
        <path d="M54 34v5l5-5M6 18v-4l-5 5" />
        <path d="M22 15l8 11 8-11M30 26v15M21 27h18M21 34h18" />
      </Tool>
      <Tool label="发帖">
        <path d="M40 4H12a6 6 0 0 0-6 6v38a6 6 0 0 0 6 6h36a6 6 0 0 0 6-6V20" />
        <path d="M24 36l21-22M50 8l2-2" strokeWidth="6" />
      </Tool>
      <Tool label="功能">
        <rect x="7.500" y="5" width="20" height="21" rx="3" />
        <rect x="7.500" y="32" width="20" height="21" rx="3" />
        <rect x="32.500" y="32" width="20" height="21" rx="3" />
        <path d="M42 4.500l10.500 12L42 28 31.500 16.500z" />
      </Tool>
      <Tool label="设自选">
        <ellipse cx="30" cy="28" rx="24.500" ry="25" />
        <path d="M19 28h.1M30 28h.1M41 28h.1" strokeWidth="5.500" />
      </Tool>
    </div>
  )
}

function NavBar() {
  return (
    <div className="flex h-[130px] items-center pl-[283px] text-[#7a7a7a]">
      <svg width="40" height="40" viewBox="0 0 40 40" stroke="currentColor" strokeWidth="5" strokeLinecap="round"><path d="M4 4.500h32M4 20h32M4 35.500h32" /></svg>
      <svg className="ml-[195px]" width="42" height="42" viewBox="0 0 42 42" fill="none" stroke="currentColor" strokeWidth="4.500"><rect x="3" y="3" width="36" height="36" rx="8" /></svg>
      <svg className="ml-[200px]" width="28" height="42" viewBox="0 0 28 42" fill="none" stroke="currentColor" strokeWidth="4.500" strokeLinecap="round"><path d="M25 3L5 18q-3 3 0 6l20 15" /></svg>
    </div>
  )
}

export default function App() {
  return (
    <div className="h-[2400px] w-[1080px] overflow-hidden bg-white font-[Roboto,'Noto_Sans_CJK_SC',sans-serif]">
      <StatusBar />
      <Header />
      <Quote />
      <Notice />
      <PeriodTabs />
      <div className="-mt-px"><MaRow /></div>
      <KChart />
      <VolumeRow />
      <VolumeChart />
      <Promo />
      <SectionTabs />
      <Cards />
      <BottomBar />
      <NavBar />
    </div>
  )
}
